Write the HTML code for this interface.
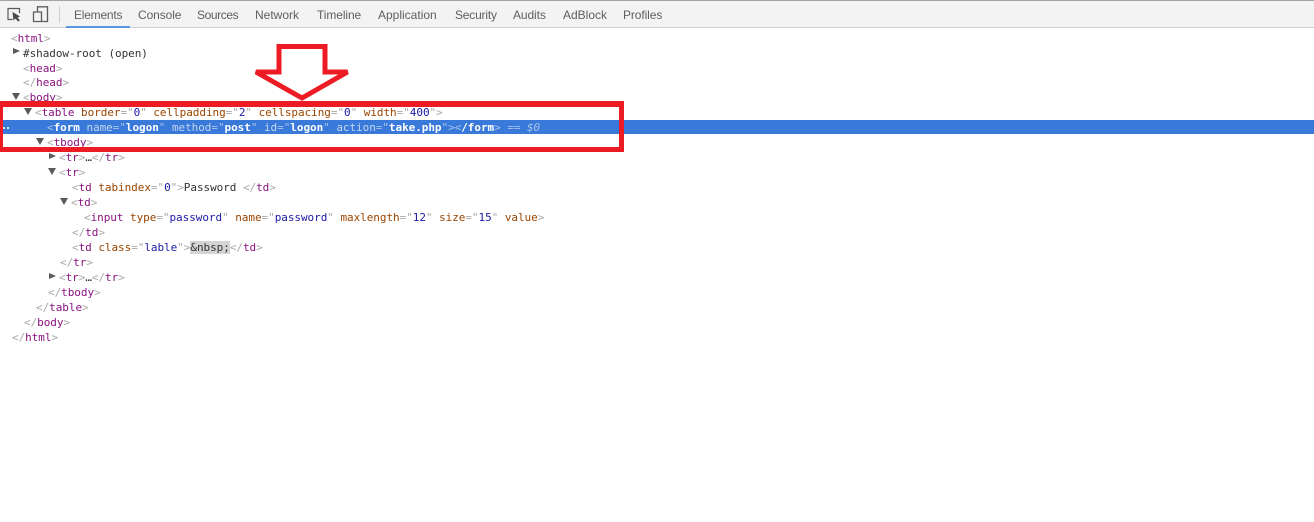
<!DOCTYPE html>
<html><head><meta charset="utf-8">
<style>
html,body{margin:0;padding:0;background:#fff;width:1314px;height:522px;overflow:hidden}
#top{position:absolute;left:0;top:0;width:1314px;background:#f3f3f3;border-top:1px solid #a3a3a3;border-bottom:1px solid #cfcfcf;box-sizing:border-box;height:28px}
.t{position:absolute;top:8px;font:12px/15px "Liberation Sans",sans-serif;color:#5f5f5f;white-space:pre;filter:blur(.25px)}
.l{position:absolute;font:11px/15px "DejaVu Sans Mono","Liberation Mono",monospace;letter-spacing:-.05px;color:#333;white-space:pre;height:15px;filter:blur(.25px)}
.n{color:#881280}.b{color:#a8a8a8}.a{color:#994500}.v{color:#1a1aa6}
.s .n,.s .b,.s .a,.s .v{color:#fff}
.s{color:#fff}
.s .a{color:#c6d6f0}.s .b{color:#a9c3ec}
.s b{font-weight:bold;color:#fff}
.ar{position:absolute;width:0;height:0}
.r{border-left:7px solid #5a5a5a;border-top:3.5px solid transparent;border-bottom:3.5px solid transparent}
.d{border-top:7px solid #5a5a5a;border-left:4px solid transparent;border-right:4px solid transparent}
</style></head>
<body>
<div id="top"></div>
<svg style="position:absolute;left:0;top:0" width="66" height="28" fill="none">
<path d="M12.5 19.5H8V8.5H19.5V13" stroke="#5c5c5c" stroke-width="1.2"/>
<path d="M12.5 12L20 16.5L17.5 17.5L20 20.5L18 21.5L15.5 18.5L13.5 20.5Z" fill="#4a4a4a"/>
<path d="M37.5 12V6.8H47.5V21.5H33.5V12H41.5V21.5" stroke="#5c5c5c" stroke-width="1.3"/>
<path d="M59.5 6V23" stroke="#d0d0d0" stroke-width="1"/>
</svg>
<div style="position:absolute;left:66px;top:26px;width:64px;height:2px;background:#5a97e0"></div>
<span class="t" style="left:74px;letter-spacing:-.22px">Elements</span>
<span class="t" style="left:138px;letter-spacing:-.1px">Console</span>
<span class="t" style="left:197px;letter-spacing:-.4px">Sources</span>
<span class="t" style="left:255px">Network</span>
<span class="t" style="left:317px;letter-spacing:-.1px">Timeline</span>
<span class="t" style="left:378px">Application</span>
<span class="t" style="left:455px;letter-spacing:-.2px">Security</span>
<span class="t" style="left:513px;letter-spacing:-.1px">Audits</span>
<span class="t" style="left:563px">AdBlock</span>
<span class="t" style="left:623px;letter-spacing:-.1px">Profiles</span>

<div style="position:absolute;left:0;top:120px;width:1314px;height:14px;background:#3879d9"></div>
<div style="position:absolute;left:3px;top:127px"><span style="display:block;width:2px;height:2px;background:#dfe9f8;box-shadow:4px 0 0 #dfe9f8"></span></div>

<div class="l" style="left:11px;top:31px"><span class="b">&lt;</span><span class="n">html</span><span class="b">&gt;</span></div>
<div class="ar r" style="left:13px;top:48px"></div>
<div class="l" style="left:23px;top:46px">#shadow-root (open)</div>
<div class="l" style="left:23px;top:61px"><span class="b">&lt;</span><span class="n">head</span><span class="b">&gt;</span></div>
<div class="l" style="left:23px;top:75px"><span class="b">&lt;/</span><span class="n">head</span><span class="b">&gt;</span></div>
<div class="ar d" style="left:12px;top:93px"></div>
<div class="l" style="left:23px;top:90px"><span class="b">&lt;</span><span class="n">body</span><span class="b">&gt;</span></div>
<div class="ar d" style="left:24px;top:108px"></div>
<div class="l" style="left:35px;top:105px"><span class="b">&lt;</span><span class="n">table</span> <span class="a">border</span><span class="b">="</span><span class="v">0</span><span class="b">"</span> <span class="a">cellpadding</span><span class="b">="</span><span class="v">2</span><span class="b">"</span> <span class="a">cellspacing</span><span class="b">="</span><span class="v">0</span><span class="b">"</span> <span class="a">width</span><span class="b">="</span><span class="v">400</span><span class="b">"&gt;</span></div>
<div class="l s" style="left:47px;top:120px"><span class="b">&lt;</span><b>form</b> <span class="a">name</span><span class="b">="</span><b>logon</b><span class="b">"</span> <span class="a">method</span><span class="b">="</span><b>post</b><span class="b">"</span> <span class="a">id</span><span class="b">="</span><b>logon</b><span class="b">"</span> <span class="a">action</span><span class="b">="</span><b>take.php</b><span class="b">"&gt;&lt;</span><b>/form</b><span class="b">&gt; == <i>$0</i></span></div>
<div class="ar d" style="left:36px;top:138px"></div>
<div class="l" style="left:47px;top:135px"><span class="b">&lt;</span><span class="n">tbody</span><span class="b">&gt;</span></div>
<div class="ar r" style="left:49px;top:153px"></div>
<div class="l" style="left:59px;top:150px"><span class="b">&lt;</span><span class="n">tr</span><span class="b">&gt;</span>…<span class="b">&lt;/</span><span class="n">tr</span><span class="b">&gt;</span></div>
<div class="ar d" style="left:48px;top:168px"></div>
<div class="l" style="left:59px;top:165px"><span class="b">&lt;</span><span class="n">tr</span><span class="b">&gt;</span></div>
<div class="l" style="left:72px;top:180px"><span class="b">&lt;</span><span class="n">td</span> <span class="a">tabindex</span><span class="b">="</span><span class="v">0</span><span class="b">"&gt;</span>Password <span class="b">&lt;/</span><span class="n">td</span><span class="b">&gt;</span></div>
<div class="ar d" style="left:60px;top:198px"></div>
<div class="l" style="left:71px;top:195px"><span class="b">&lt;</span><span class="n">td</span><span class="b">&gt;</span></div>
<div class="l" style="left:84px;top:210px"><span class="b">&lt;</span><span class="n">input</span> <span class="a">type</span><span class="b">="</span><span class="v">password</span><span class="b">"</span> <span class="a">name</span><span class="b">="</span><span class="v">password</span><span class="b">"</span> <span class="a">maxlength</span><span class="b">="</span><span class="v">12</span><span class="b">"</span> <span class="a">size</span><span class="b">="</span><span class="v">15</span><span class="b">"</span> <span class="a">value</span><span class="b">&gt;</span></div>
<div class="l" style="left:72px;top:225px"><span class="b">&lt;/</span><span class="n">td</span><span class="b">&gt;</span></div>
<div class="l" style="left:72px;top:240px"><span class="b">&lt;</span><span class="n">td</span> <span class="a">class</span><span class="b">="</span><span class="v">lable</span><span class="b">"&gt;</span><span style="background:#d4d4d4">&amp;nbsp;</span><span class="b">&lt;/</span><span class="n">td</span><span class="b">&gt;</span></div>
<div class="l" style="left:60px;top:255px"><span class="b">&lt;/</span><span class="n">tr</span><span class="b">&gt;</span></div>
<div class="ar r" style="left:49px;top:273px"></div>
<div class="l" style="left:59px;top:270px"><span class="b">&lt;</span><span class="n">tr</span><span class="b">&gt;</span>…<span class="b">&lt;/</span><span class="n">tr</span><span class="b">&gt;</span></div>
<div class="l" style="left:48px;top:285px"><span class="b">&lt;/</span><span class="n">tbody</span><span class="b">&gt;</span></div>
<div class="l" style="left:36px;top:300px"><span class="b">&lt;/</span><span class="n">table</span><span class="b">&gt;</span></div>
<div class="l" style="left:24px;top:315px"><span class="b">&lt;/</span><span class="n">body</span><span class="b">&gt;</span></div>
<div class="l" style="left:12px;top:330px"><span class="b">&lt;/</span><span class="n">html</span><span class="b">&gt;</span></div>

<div style="position:absolute;left:-2px;top:101px;width:626px;height:51px;box-sizing:border-box;border:5px solid #ed1c24;border-top-width:6px"></div>
<svg style="position:absolute;left:0;top:0" width="1314" height="200" fill="none">
<path d="M279 46.5H325V72H347.5L302 98L256 72H279Z" stroke="#ed1c24" stroke-width="5" stroke-linejoin="miter" stroke-miterlimit="3"/>
</svg>
</body></html>
